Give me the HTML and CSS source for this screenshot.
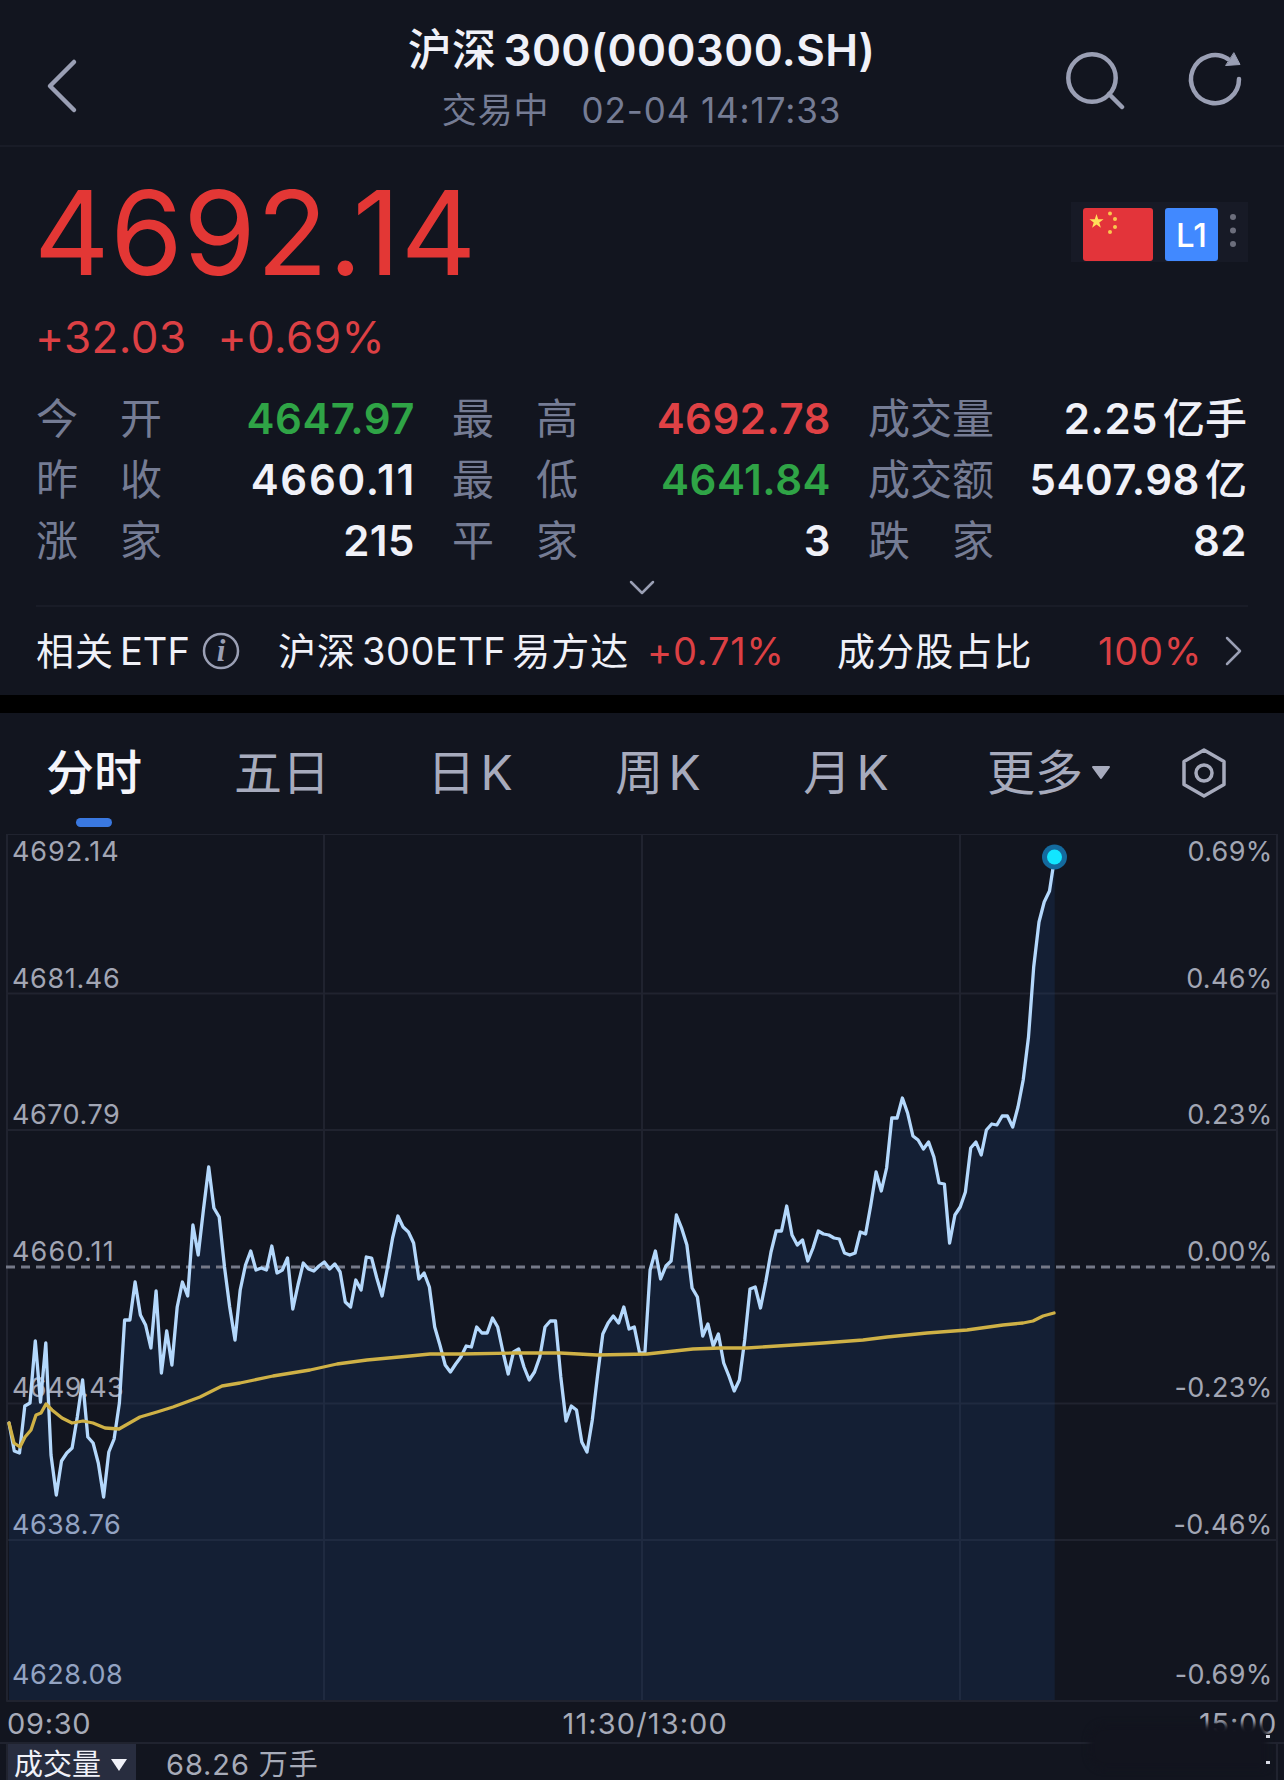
FILE: index.html
```html
<!DOCTYPE html>
<html lang="zh-CN">

<head>
    <meta charset="UTF-8">
    <meta name="viewport" content="width=device-width, initial-scale=1.0">
    <title>沪深300(000300.SH)</title>
    <link rel="stylesheet" href="styles.css">
</head>

<body>
    <header class="header">
        <svg class="back" width="34" height="56" viewBox="0 0 34 56">
            <path d="M30 4L6 28L30 52" />
        </svg>
        <div class="heading">
            <h1><span class="cjk">沪深</span>300(000300.SH)</h1>
            <p><span class="cjk">交易中</span>02-04 14:17:33</p>
        </div>
        <div class="actions">
            <svg width="64" height="64" viewBox="0 0 64 64">
                <circle cx="31" cy="31" r="23.7" />
                <path d="M48 47L61 60" />
            </svg>
            <svg width="64" height="64" viewBox="0 0 64 64">
                <path d="M56 32A24 24 0 1 1 45 12" />
                <path class="arrow" d="M51 6L57 17.500L43 18.500Z" />
            </svg>
        </div>
    </header>

    <section class="quote">
        <div class="quote-top">
            <div class="price">4692.14</div>
            <div class="badges">
                <svg class="flag" width="70" height="53" viewBox="0 0 70 53">
                    <rect width="70" height="53" rx="3" fill="#e3343a" />
                    <path d="M13.500 6L15.200 11.200L20.600 11.200L16.300 14.500L17.900 19.800L13.500 16.600L9.100 19.800L10.700 14.500L6.400 11.200L11.800 11.200Z" fill="#ffe05a" />
                    <g fill="#f9c84e">
                        <circle cx="27" cy="5.500" r="2" />
                        <circle cx="32" cy="11" r="2" />
                        <circle cx="32" cy="19" r="2" />
                        <circle cx="27" cy="24" r="2" />
                    </g>
                </svg>
                <span class="level">L1</span>
                <svg class="dots" width="8" height="40" viewBox="0 0 8 40">
                    <circle cx="4" cy="6" r="3" />
                    <circle cx="4" cy="19.500" r="3" />
                    <circle cx="4" cy="33" r="3" />
                </svg>
            </div>
        </div>
        <div class="change"><span>+32.03</span><span>+0.69%</span></div>

        <div class="stats">
            <div class="stat"><span class="label"><i>今</i><i>开</i></span><b class="green">4647.97</b></div>
            <div class="stat"><span class="label"><i>最</i><i>高</i></span><b class="red">4692.78</b></div>
            <div class="stat"><span class="label"><i>成</i><i>交</i><i>量</i></span><b>2.25<span class="unit">亿手</span></b></div>
            <div class="stat"><span class="label"><i>昨</i><i>收</i></span><b class="wide">4660.11</b></div>
            <div class="stat"><span class="label"><i>最</i><i>低</i></span><b class="green">4641.84</b></div>
            <div class="stat"><span class="label"><i>成</i><i>交</i><i>额</i></span><b>5407.98<span class="unit">亿</span></b></div>
            <div class="stat"><span class="label"><i>涨</i><i>家</i></span><b>215</b></div>
            <div class="stat"><span class="label"><i>平</i><i>家</i></span><b>3</b></div>
            <div class="stat"><span class="label"><i>跌</i><i>家</i></span><b>82</b></div>
        </div>
        <div class="expand">
            <svg width="28" height="18" viewBox="0 0 28 18">
                <path d="M3 3L14 14L25 3" />
            </svg>
        </div>

        <div class="etf">
            <span class="etf-title"><span class="cjk">相关</span>ETF</span>
            <svg class="info" width="38" height="38" viewBox="0 0 38 38">
                <circle cx="19" cy="19" r="17" />
                <text x="19" y="29">i</text>
            </svg>
            <span class="etf-name"><span class="cjk">沪深</span>300ETF<span class="cjk after">易方达</span></span>
            <span class="etf-change">+0.71%</span>
            <span class="etf-ratio">成分股占比</span>
            <span class="etf-percent">100%</span>
            <svg class="go" width="20" height="34" viewBox="0 0 20 34">
                <path d="M3 4L16 17L3 30" />
            </svg>
        </div>
    </section>

    <nav class="tabs">
        <a class="tab active">分时</a>
        <a class="tab">五日</a>
        <a class="tab"><span>日</span>K</a>
        <a class="tab"><span>周</span>K</a>
        <a class="tab"><span>月</span>K</a>
        <a class="tab">更多
            <svg width="20" height="14" viewBox="0 0 20 14">
                <path d="M2 1H18L10 12Z" />
            </svg>
        </a>
        <a class="tab settings">
            <svg width="50" height="54" viewBox="0 0 50 54">
                <path d="M25 4L45 15.500V38.500L25 50L5 38.500V15.500Z" />
                <circle cx="25" cy="27" r="8" />
            </svg>
        </a>
    </nav>

    <!-- intraday chart, y axis starts at page offset 834 -->
    <svg class="chart" width="1284" height="868" viewBox="0 834 1284 868">
        <g class="grid">
            <rect x="7" y="834" width="1270" height="867" />
            <path d="M7 993.500H1277M7 1130H1277M7 1403.500H1277M7 1540H1277" />
            <path d="M324 834V1701M642 834V1701M960 834V1701" />
        </g>
        <polygon id="area" class="area" />
        <g class="axis">
            <text x="12" y="861" textLength="107">4692.14</text>
            <text x="12" y="988" textLength="108">4681.46</text>
            <text x="12" y="1124" textLength="108">4670.79</text>
            <text x="12" y="1261" textLength="102">4660.11</text>
            <text x="12" y="1397" textLength="112">4649.43</text>
            <text class="tint" x="12" y="1534" textLength="109">4638.76</text>
            <text class="tint" x="12" y="1684" textLength="111">4628.08</text>
        </g>
        <g class="axis right">
            <text x="1272.500" y="861">0.69%</text>
            <text x="1272.500" y="988">0.46%</text>
            <text x="1272.500" y="1124">0.23%</text>
            <text x="1272.500" y="1261">0.00%</text>
            <text x="1272.500" y="1397">-0.23%</text>
            <text x="1272.500" y="1534">-0.46%</text>
            <text x="1272.500" y="1684">-0.69%</text>
        </g>
        <path class="base" d="M6 1267H1277" />
        <polyline id="price" class="price-line" />
        <polyline id="average" class="average-line" />
        <circle cx="1054.500" cy="857" r="12.500" fill="#146a9e" />
        <circle cx="1054.500" cy="857" r="7.500" fill="#12e6ff" />
    </svg>

    <div class="times">
        <span>09:30</span>
        <span class="noon">11:30/13:00</span>
        <span>15:00</span>
        <div class="smudge"></div>
        <div class="specks"></div>
    </div>

    <div class="volume">
        <div class="volume-select">成交量
            <svg width="18" height="14" viewBox="0 0 18 14">
                <path d="M1 1H17L9 13Z" />
            </svg>
        </div>
        <span class="volume-value">68.26 万手</span>
    </div>

    <script src="script.js"></script>
</body>

</html>
```
FILE: styles.css
```css
* {
    box-sizing: border-box;
}

body {
    margin: 0;
    width: 1284px;
    height: 1780px;
    overflow: hidden;
    background: #12151f;
    color: #f0f1f8;
    font-family: Inter, "Noto Sans CJK SC", sans-serif;
}

svg {
    display: block;
    fill: none;
    stroke-linecap: round;
    stroke-linejoin: round;
}

/* header */
.header {
    display: grid;
    grid-template-columns: 1fr auto 1fr;
    height: 147px;
    padding: 21px 37px 0 44px;
    border-bottom: 2px solid #191c27;
}

.back {
    margin-top: 37px;
    stroke: #9a9fb4;
    stroke-width: 4.5;
}

.heading {
    padding-right: 8px;
    text-align: center;
    white-space: nowrap;
}

.heading h1 {
    margin: 0;
    font-size: 44px;
    line-height: 59px;
    font-weight: 600;
    letter-spacing: 0.4px;
}

.heading h1 .cjk {
    font-weight: 500;
    margin-right: 7px;
}

.heading p {
    margin: 10px 0 0;
    font-size: 35px;
    line-height: 40px;
    letter-spacing: 0.9px;
    color: #757c94;
}

.heading p .cjk {
    margin-right: 32px;
}

.actions {
    display: flex;
    justify-content: flex-end;
    gap: 58px;
    margin-top: 26px;
    stroke: #9a9fb4;
    stroke-width: 4.5;
}

.actions .arrow {
    fill: #9a9fb4;
    stroke-width: 1;
}

/* quote */
.quote {
    padding: 26px 36px 0;
    border-bottom: 18px solid #000;
    height: 566px;
}

.quote-top {
    display: flex;
    justify-content: space-between;
    align-items: center;
    height: 120px;
}

.price {
    margin: 0 0 0 -2px;
    font-size: 117px;
    line-height: 120px;
    letter-spacing: 0.6px;
    color: #e33735;
}

.badges {
    display: flex;
    align-items: center;
    height: 60px;
    width: 177px;
    margin-top: -2px;
    padding: 5px 0 0 12px;
    background: #171a26;
}

.level {
    width: 53px;
    height: 53px;
    margin: 0 11px 0 12px;
    border-radius: 3px;
    background: #4189ff;
    color: #fff;
    font-size: 33px;
    font-weight: 500;
    line-height: 55px;
    text-align: center;
}

.dots {
    fill: #6c6e7c;
    margin-top: -7px;
}

.change {
    display: flex;
    gap: 31px;
    margin: 19px 0 0 -1px;
    font-size: 44px;
    line-height: 50px;
    letter-spacing: 0.4px;
    color: #dc4044;
}

.stats {
    display: grid;
    grid-template-columns: repeat(3, 379px);
    column-gap: 37px;
    margin-top: 26px;
}

.stat {
    display: flex;
    justify-content: space-between;
    height: 61px;
    line-height: 62px;
    font-size: 42px;
    white-space: nowrap;
}

.label {
    display: flex;
    justify-content: space-between;
    width: 126px;
    color: #757c94;
}

.label i {
    font-style: normal;
}

.stat b {
    font-weight: 600;
    letter-spacing: 0.5px;
}

.stat .wide {
    letter-spacing: 1.7px;
    margin-right: -1px;
}

.unit {
    margin-left: 5px;
    font-weight: 500;
    letter-spacing: 0;
}

.green {
    color: #2fa446;
}

.red {
    color: #df4145;
}

.expand {
    display: flex;
    justify-content: center;
    height: 34px;
    padding-top: 8px;
    stroke: #9a9fb4;
    stroke-width: 2.5;
}

.etf {
    display: flex;
    align-items: center;
    height: 89px;
    border-top: 2px solid #191c27;
    font-size: 38px;
    line-height: 50px;
    white-space: nowrap;
}

.etf .cjk {
    letter-spacing: 1px;
    margin-right: 6px;
}

.etf .after {
    margin: 0 0 0 6px;
}

.etf-title {
    width: 166px;
}

.info {
    stroke: #9a9fb4;
    stroke-width: 2.5;
}

.info text {
    font: italic bold 31px "Liberation Serif", serif;
    fill: #9a9fb4;
    stroke: none;
    text-anchor: middle;
}

.etf-name {
    width: 369px;
    margin-left: 38px;
    letter-spacing: 0.5px;
}

.etf-change,
.etf-percent {
    color: #dc4044;
    letter-spacing: 0.8px;
}

.etf-change {
    width: 190px;
}

.etf-ratio {
    letter-spacing: 1.1px;
    margin-right: auto;
}

.go {
    margin: 0 4px 0 22px;
    stroke: #9a9fb4;
    stroke-width: 2.5;
}

/* period tabs */
.tabs {
    display: grid;
    grid-template-columns: repeat(5, 188px) 218px 92px;
    height: 121px;
}

.tab {
    position: relative;
    display: flex;
    justify-content: center;
    align-items: center;
    height: 120px;
    font-size: 48px;
    line-height: 60px;
    color: #a7abbd;
}

.tab span {
    margin-right: 5px;
}

.tab svg {
    fill: #a7abbd;
    stroke: #a7abbd;
    stroke-width: 2;
    margin-left: 8px;
}

.tab.active {
    color: #f4f5fb;
    font-weight: 500;
}

.tab.active::after {
    content: "";
    position: absolute;
    left: 76px;
    bottom: 6px;
    width: 36px;
    height: 9px;
    border-radius: 5px;
    background: #3a78e0;
}

.settings svg {
    fill: none;
    stroke-width: 3.5;
    margin: 0;
}

/* chart */
.grid {
    stroke: #20232f;
    stroke-width: 2;
}

.axis {
    fill: #a2a6b4;
    font-size: 27px;
    letter-spacing: 0.3px;
}

.axis .tint {
    fill: #93a3c2;
}

.right {
    text-anchor: end;
}

.base {
    stroke: #747887;
    stroke-width: 3;
    stroke-dasharray: 9 6;
    stroke-linecap: butt;
}

.area {
    fill: rgba(28, 66, 120, 0.24);
}

.price-line {
    stroke: #b4d8fc;
    stroke-width: 3.3;
}

.average-line {
    stroke: #cfb146;
    stroke-width: 3.3;
}

.times {
    position: relative;
    display: flex;
    justify-content: space-between;
    height: 42px;
    padding: 0 7px;
    border-bottom: 2px solid #20232f;
    font-size: 29px;
    line-height: 44px;
    letter-spacing: 0.7px;
    color: #a7abb8;
}

.noon {
    letter-spacing: 1.1px;
}

/* dark blot over the bottom right corner */
.smudge {
    position: absolute;
    right: 17px;
    top: 22px;
    width: 178px;
    height: 45px;
    border-radius: 16px 4px 4px 16px;
    background: #12141e;
    filter: blur(3px);
}

.specks {
    position: absolute;
    right: 14px;
    top: 33px;
    width: 4px;
    height: 3px;
    background: #d8dae4;
    box-shadow: 0 26px #d8dae4;
}

.volume {
    display: flex;
    height: 36px;
    margin: 0 6px;
    border: solid #20232f;
    border-width: 0 2px;
    line-height: 42px;
    font-size: 29px;
}

.volume-select {
    display: flex;
    align-items: center;
    width: 128px;
    height: 36px;
    padding: 6px 0 0 6px;
    background: #282d3f;
}

.volume-select svg {
    fill: #f0f1f8;
    margin-left: 9px;
}

.volume-value {
    margin-left: 30px;
    letter-spacing: 0.9px;
    color: #a7abb8;
}
```
FILE: script.js
```js
// one value per minute
const prices = [
    1423, 1451, 1453, 1406, 1403, 1341, 1402, 1343, 1455, 1495, 1461, 1453, 1448, 1417, 1380, 1437, 1443, 1463, 1497, 1452,
    1439, 1403, 1320, 1320, 1282, 1315, 1325, 1348, 1291, 1373, 1331, 1365, 1307, 1282, 1296, 1225, 1255, 1210, 1167, 1208,
    1217, 1267, 1307, 1340, 1290, 1265, 1251, 1270, 1268, 1270, 1246, 1273, 1270, 1258, 1309, 1285, 1263, 1269, 1271, 1266,
    1262, 1269, 1264, 1272, 1302, 1307, 1280, 1290, 1257, 1258, 1278, 1296, 1268, 1238, 1216, 1227, 1232, 1243, 1279, 1273,
    1287, 1327, 1345, 1365, 1372, 1364, 1357, 1346, 1347, 1327, 1333, 1333, 1318, 1327, 1352, 1374, 1352, 1349, 1367, 1380,
    1372, 1357, 1327, 1321, 1321, 1377, 1421, 1406, 1410, 1442, 1452, 1420, 1375, 1334, 1323, 1316, 1323, 1307, 1329, 1327,
    1353, 1353, 1270, 1251, 1279, 1266, 1261, 1215, 1228, 1245, 1288, 1297, 1336, 1324, 1346, 1334, 1363, 1376, 1391, 1380,
    1340, 1289, 1287, 1308, 1282, 1252, 1231, 1231, 1206, 1235, 1245, 1240, 1261, 1248, 1231, 1234, 1235, 1238, 1239, 1253,
    1255, 1253, 1232, 1234, 1205, 1172, 1191, 1168, 1118, 1118, 1098, 1113, 1136, 1140, 1149, 1142, 1157, 1183, 1184, 1243,
    1215, 1207, 1192, 1148, 1142, 1155, 1130, 1124, 1125, 1116, 1116, 1127, 1107, 1080, 1037, 967, 922, 902, 891, 857
];

const average = "9,1423 14,1443 20,1447 25,1437 31,1430 36,1415 41,1413 46,1404 52,1410 62,1418 72,1423 83,1421 93,1423 " +
    "105,1428 119,1429 140,1417 157,1412 173,1407 200,1397 222,1386 240,1383 273,1376 310,1370 337,1364 367,1360 410,1356 " +
    "430,1354 460,1354 513,1353 560,1353 597,1355 647,1354 693,1349 720,1348 747,1348 793,1345 823,1343 863,1340 887,1337 " +
    "927,1333 967,1330 1003,1325 1023,1323 1033,1321 1043,1316 1054,1313";

const points = prices.map((y, i) => (9 + i * 5.255).toFixed(1) + "," + y).join(" ");

document.getElementById("price").setAttribute("points", points);
document.getElementById("area").setAttribute("points", "9,1700 " + points + " 1054.7,1700");
document.getElementById("average").setAttribute("points", average);
```
